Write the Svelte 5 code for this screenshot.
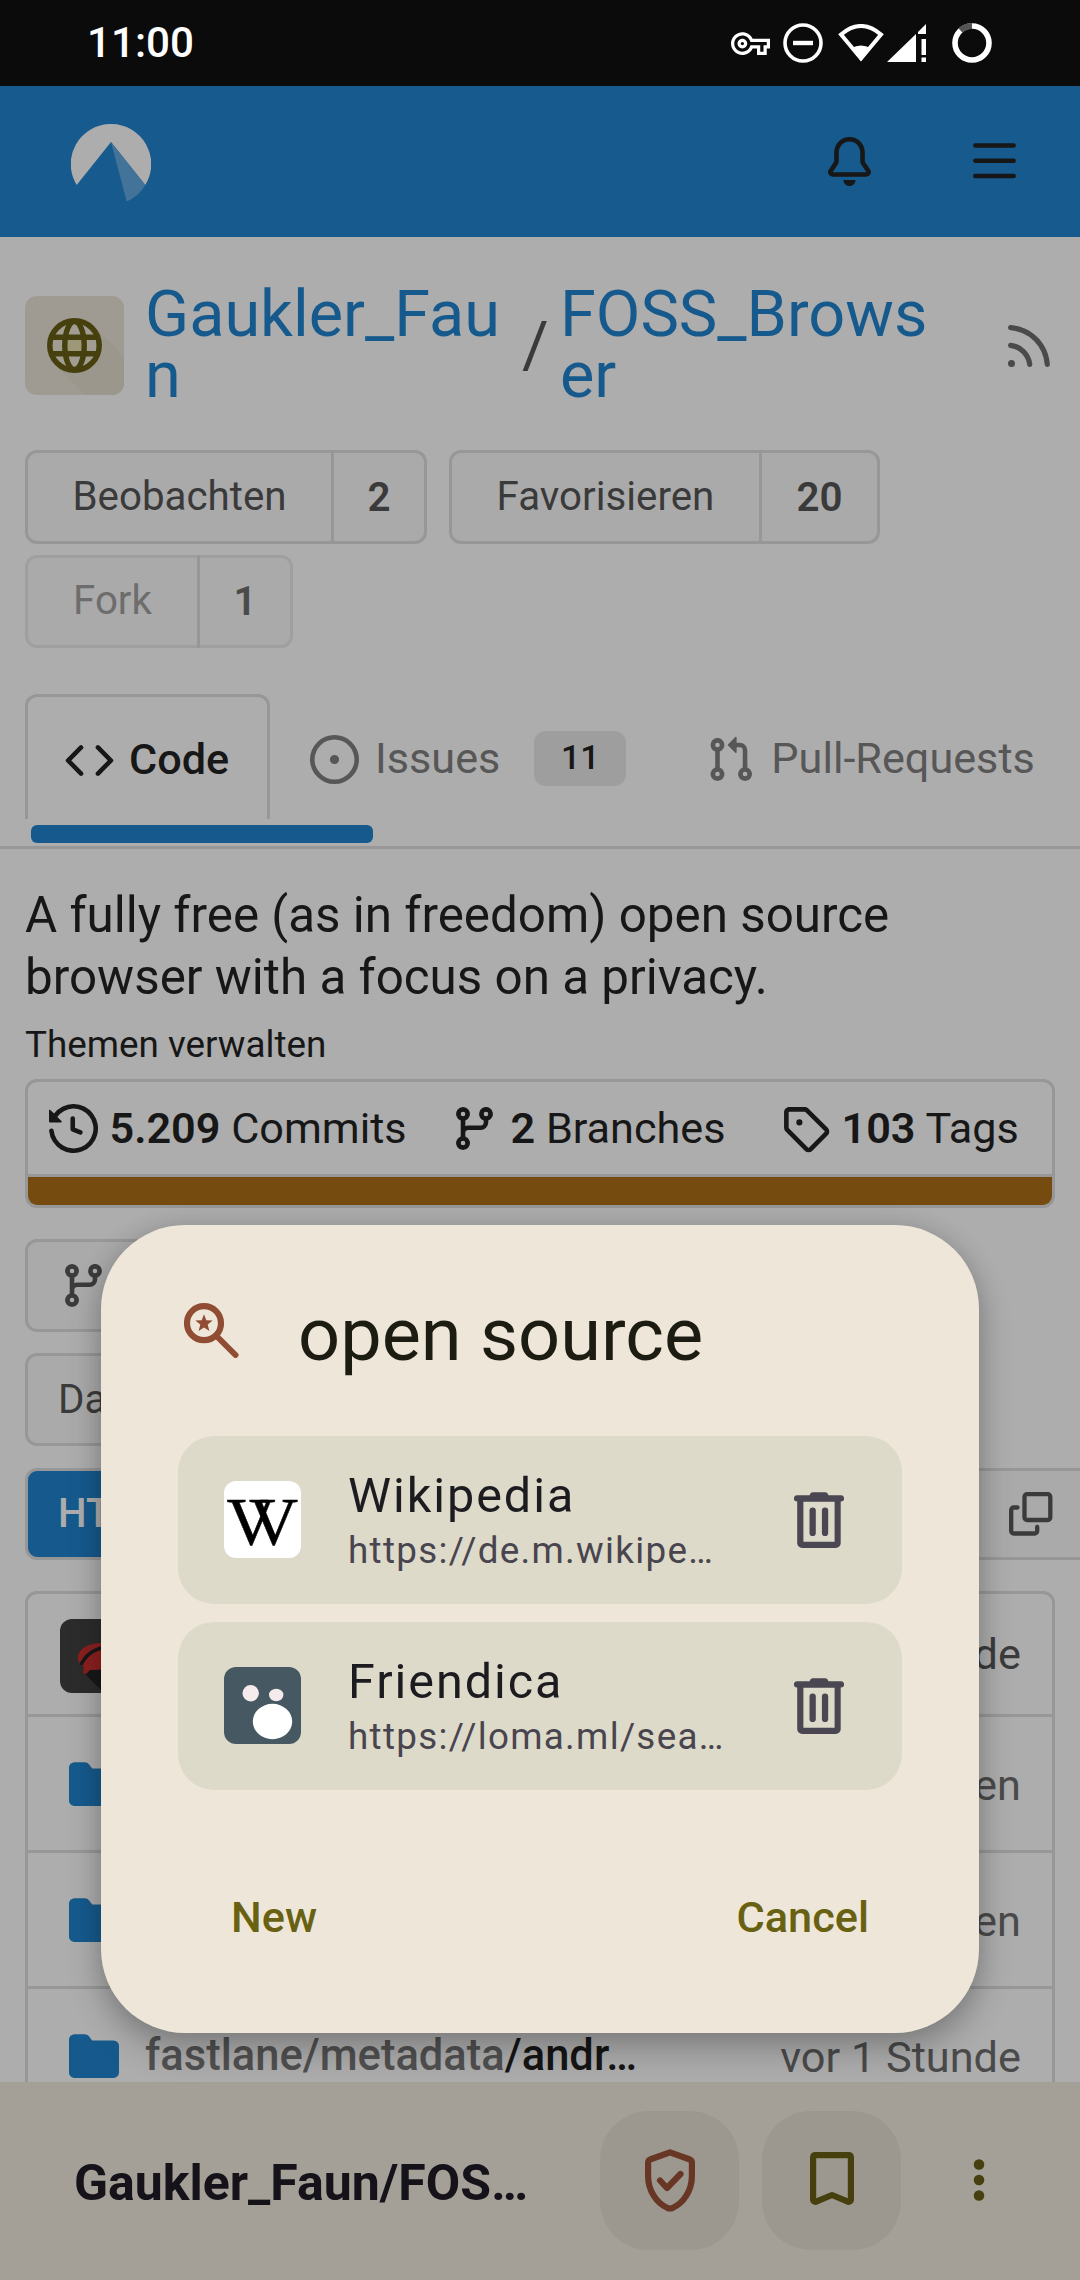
<script>
  const icons = {
    bell: 'M8 16a2 2 0 0 0 1.985-1.75c.017-.137-.097-.25-.235-.25h-3.5c-.138 0-.252.113-.235.25A2 2 0 0 0 8 16ZM3 5a5 5 0 0 1 10 0v2.947c0 .05.015.098.042.139l1.703 2.555A1.519 1.519 0 0 1 13.482 13H2.518a1.516 1.516 0 0 1-1.263-2.36l1.703-2.554A.255.255 0 0 0 3 7.947Zm5-3.5A3.5 3.5 0 0 0 4.5 5v2.947c0 .346-.102.683-.294.97l-1.703 2.556a.017.017 0 0 0-.003.01l.001.006c0 .002.002.004.004.006l.006.004.007.001h10.964l.007-.001.006-.004.004-.006.001-.007a.017.017 0 0 0-.003-.01l-1.703-2.554a1.745 1.745 0 0 1-.294-.97V5A3.5 3.5 0 0 0 8 1.5Z',
    bars: 'M1 2.75A.75.75 0 0 1 1.75 2h12.5a.75.75 0 0 1 0 1.5H1.75A.75.75 0 0 1 1 2.75Zm0 5A.75.75 0 0 1 1.75 7h12.5a.75.75 0 0 1 0 1.5H1.75A.75.75 0 0 1 1 7.75ZM1.75 12h12.5a.75.75 0 0 1 0 1.5H1.75a.75.75 0 0 1 0-1.5Z',
    rss: 'M2.002 2.725a.75.75 0 0 1 .797-.699C8.79 2.42 13.58 7.21 13.974 13.201a.75.75 0 0 1-1.497.098 10.502 10.502 0 0 0-9.776-9.776.747.747 0 0 1-.7-.798ZM2.84 7.05h-.002a7.002 7.002 0 0 1 6.113 6.111.75.75 0 0 1-1.49.178 5.503 5.503 0 0 0-4.8-4.8.75.75 0 0 1 .179-1.489ZM2 13a1 1 0 1 1 2 0 1 1 0 0 1-2 0Z',
    code: 'm11.28 3.22 4.25 4.25a.75.75 0 0 1 0 1.06l-4.25 4.25a.749.749 0 0 1-1.275-.326.749.749 0 0 1 .215-.734L13.94 8l-3.72-3.72a.749.749 0 0 1 .326-1.275.749.749 0 0 1 .734.215Zm-6.56 0a.751.751 0 0 1 1.042.018.751.751 0 0 1 .018 1.042L2.06 8l3.72 3.72a.749.749 0 0 1-.326 1.275.749.749 0 0 1-.734-.215L.47 8.53a.75.75 0 0 1 0-1.06Z',
    issue: 'M8 9.5a1.5 1.5 0 1 0 0-3 1.5 1.5 0 0 0 0 3ZM8 0a8 8 0 1 1 0 16A8 8 0 0 1 8 0ZM1.5 8a6.5 6.5 0 1 0 13 0 6.5 6.5 0 0 0-13 0Z',
    pull: 'M1.5 3.25a2.25 2.25 0 1 1 3 2.122v5.256a2.251 2.251 0 1 1-1.5 0V5.372A2.25 2.25 0 0 1 1.5 3.25Zm5.677-.177L9.573.677A.25.25 0 0 1 10 .854V2.5h1A2.5 2.5 0 0 1 13.5 5v5.628a2.251 2.251 0 1 1-1.5 0V5a1 1 0 0 0-1-1h-1v1.646a.25.25 0 0 1-.427.177L7.177 3.427a.25.25 0 0 1 0-.354ZM3.75 2.5a.75.75 0 1 0 0 1.5.75.75 0 0 0 0-1.5Zm0 9.5a.75.75 0 1 0 0 1.5.75.75 0 0 0 0-1.5Zm8.25.75a.75.75 0 1 0 1.5 0 .75.75 0 0 0-1.5 0Z',
    history: 'm.427 1.927 1.215 1.215a8.002 8.002 0 1 1-1.6 5.685.75.75 0 1 1 1.493-.154 6.5 6.5 0 1 0 1.18-4.458l1.358 1.358A.25.25 0 0 1 3.896 6H.25A.25.25 0 0 1 0 5.75V2.104a.25.25 0 0 1 .427-.177ZM7.75 4a.75.75 0 0 1 .75.75v2.992l2.028.812a.75.75 0 0 1-.557 1.392l-2.5-1A.751.751 0 0 1 7 8.25v-3.5A.75.75 0 0 1 7.75 4Z',
    branch: 'M9.5 3.25a2.25 2.25 0 1 1 3 2.122V6A2.5 2.5 0 0 1 10 8.5H6a1 1 0 0 0-1 1v1.128a2.251 2.251 0 1 1-1.5 0V5.372a2.25 2.25 0 1 1 1.5 0v1.836A2.493 2.493 0 0 1 6 7h4a1 1 0 0 0 1-1v-.628A2.25 2.25 0 0 1 9.5 3.25Zm-6 0a.75.75 0 1 0 1.5 0 .75.75 0 0 0-1.5 0Zm8.25-.75a.75.75 0 1 0 0 1.5.75.75 0 0 0 0-1.5ZM4.25 12a.75.75 0 1 0 0 1.5.75.75 0 0 0 0-1.5Z',
    tag: 'M1 7.775V2.75C1 1.784 1.784 1 2.75 1h5.025c.464 0 .91.184 1.238.513l6.25 6.25a1.75 1.75 0 0 1 0 2.474l-5.026 5.026a1.75 1.75 0 0 1-2.474 0l-6.25-6.25A1.752 1.752 0 0 1 1 7.775Zm1.5 0c0 .066.026.13.073.177l6.25 6.25a.25.25 0 0 0 .354 0l5.025-5.025a.25.25 0 0 0 0-.354l-6.25-6.25a.25.25 0 0 0-.177-.073H2.75a.25.25 0 0 0-.25.25ZM6 5a1 1 0 1 1 0 2 1 1 0 0 1 0-2Z',
    folder: 'M1.75 1A1.75 1.75 0 0 0 0 2.75v10.5C0 14.216.784 15 1.75 15h12.5A1.75 1.75 0 0 0 16 13.25v-8.5A1.75 1.75 0 0 0 14.25 3H7.5a.25.25 0 0 1-.2-.1l-.9-1.2C6.07 1.26 5.55 1 5 1H1.75Z'
  };

  const stats = [
    { icon: 'history', value: '5.209', label: 'Commits', cls: 'commits' },
    { icon: 'branch', value: '2', label: 'Branches', cls: 'branches' },
    { icon: 'tag', value: '103', label: 'Tags', cls: 'tags' }
  ];

  const engines = [
    { name: 'Wikipedia', url: 'https://de.m.wikipe…', icon: 'wiki' },
    { name: 'Friendica', url: 'https://loma.ml/sea…', icon: 'friendica' }
  ];

  const files = [
    { dir: '', name: '', age: 'Tagen' },
    { dir: '', name: '', age: 'Tagen' },
    { dir: 'fastlane/metadata', name: '/andr…', age: 'vor 1 Stunde' }
  ];
</script>

{#snippet oct(name)}
  <svg class="oct" viewBox="0 0 16 16"><path fill="currentColor" d={icons[name]} /></svg>
{/snippet}

<div class="screen">
  <div class="status">
    <span class="clock">11:00</span>
    <svg class="key" viewBox="0 0 24 24"><path fill="#fff" d="M22 19h-6v-4h-2.680c-1.140 2.420-3.600 4-6.320 4-3.860 0-7-3.140-7-7s3.140-7 7-7c2.720 0 5.170 1.580 6.320 4H24v6h-2v4zm-4-2h2v-4h2v-2H11.940l-.23-.67C11.010 8.340 9.110 7 7 7c-2.760 0-5 2.240-5 5s2.240 5 5 5c2.110 0 4.010-1.340 4.710-3.330l.23-.67H18v4zM7 15c-1.650 0-3-1.350-3-3s1.350-3 3-3 3 1.350 3 3-1.350 3-3 3zm0-4c-.55 0-1 .45-1 1s.45 1 1 1 1-.45 1-1-.45-1-1-1z" /></svg>
    <svg class="dnd" viewBox="0 0 40 40"><circle cx="20" cy="20" r="18" fill="none" stroke="#fff" stroke-width="3.6" /><path d="M10 20h20" stroke="#fff" stroke-width="4.4" /></svg>
    <svg class="wifi" viewBox="0 0 46 38"><path fill="none" stroke="#fff" stroke-width="4" d="M3 10.500Q23 -6.500 43 10.500L23 34.500Z" /><path fill="#fff" d="M13 24.500Q23 18.500 33 24.500L23 37Z" /></svg>
    <svg class="signal" viewBox="0 0 39 38"><path fill="#fff" d="M0 38 29 10v28ZM31 8l8-8v10h-8ZM34.500 15H39v16h-4.500ZM34.500 33.500H39V38h-4.500Z" /></svg>
    <svg class="battery" viewBox="0 0 40 40"><circle cx="20" cy="20" r="17" fill="none" stroke="#fff" stroke-width="5.600" /><path d="M8.500 7.500A17 17 0 0 1 20 3" fill="none" stroke="#545454" stroke-width="5.800" /></svg>
  </div>

  <div class="navbar">
    <svg class="logo" viewBox="0 0 80 80">
      <path fill="#adadad" d="M40 0A40 40 0 0 0 5.700 61L40 18 74.300 61A40 40 0 0 0 40 0Z" />
      <path fill="#447399" d="M40 18 55.700 77.500A40 40 0 0 0 74.300 61Z" />
    </svg>
    {@render oct('bell')}
    {@render oct('bars')}
  </div>

  <main>
    <div class="repo">
      <svg class="avatar" viewBox="0 0 99 99">
        <rect width="99" height="99" rx="12" fill="#a09b92" />
        <path fill="#9b978c" d="M69 30 99 61v26a12 12 0 0 1-12 12H60L30 69Z" />
        <circle cx="49.500" cy="49.500" r="25" fill="#a29d92" />
        <path d="M43 41h13v17H43Z" fill="#9d9878" />
        <g fill="none" stroke="#46400e" stroke-width="5.500">
          <circle cx="49.500" cy="49.500" r="24.700" />
          <ellipse cx="49.500" cy="49.500" rx="9.700" ry="24" />
          <path d="M27 41.300h45M27 57.700h45" />
        </g>
      </svg>
      <a class="owner" href="#owner">Gaukler_Faun</a>
      <span class="slash">/</span>
      <a class="name" href="#repo">FOSS_Browser</a>
      <span class="rss">{@render oct('rss')}</span>
    </div>

    <div class="actions">
      <div class="split watch"><span class="label">Beobachten</span><b>2</b></div>
      <div class="split star"><span class="label">Favorisieren</span><b>20</b></div>
      <div class="split fork"><span class="label">Fork</span><b>1</b></div>
    </div>

    <div class="tabbar">
      <div class="tabs">
        <div class="tab active">{@render oct('code')}<span>Code</span></div>
        <div class="tab issues">{@render oct('issue')}<span>Issues</span><em>11</em></div>
        <div class="tab pulls">{@render oct('pull')}<span>Pull-Requests</span></div>
      </div>
      <div class="progress"></div>
    </div>

    <div class="body">
      <p class="desc">A fully free (as in freedom) open source<br />browser with a focus on a privacy.</p>
      <p class="topics">Themen verwalten</p>

      <div class="stats">
        <div class="statrow">
          {#each stats as s}
            <div class="stat {s.cls}">{@render oct(s.icon)}<span><b>{s.value}</b> {s.label}</span></div>
          {/each}
        </div>
        <div class="lang"></div>
      </div>

      <div class="box select">{@render oct('branch')}</div>
      <div class="box file">Datei</div>
      <div class="clone">
        <div class="https">HTTPS</div>
        <div class="url">
          <svg class="copy" viewBox="0 0 44 44"><g fill="none" stroke="currentColor" stroke-width="4.300" stroke-linecap="round"><rect x="15.500" y="2.200" width="25.800" height="25.800" rx="2.500" /><path d="M8.500 15.500H4.700a2.500 2.500 0 0 0-2.500 2.500v21a2.500 2.500 0 0 0 2.500 2.500h21a2.500 2.500 0 0 0 2.500-2.500v-4" /></g></svg>
        </div>
      </div>

      <div class="table">
        <div class="latest">
          <svg class="committer" viewBox="0 0 74 74"><rect width="74" height="74" rx="12" fill="#2c2c2c" /><path fill="#181818" d="M24 54 50 30l24 20v24H44Z" /><path fill="#8c2020" d="M18 39C18 29 30 23 46 24c9 1 16 8 15 14-3 8-14 14-31 13l-4 4-3-1 1-6c-4-2-6-5-6-9Z" /><path fill="none" stroke="#181818" stroke-width="3.600" d="M21 46c3-7 10-15 24-18" /></svg>
          <span>vor 1 Stunde</span>
        </div>
        {#each files as f}
          <div class="row">
            <span class="dir">{@render oct('folder')}</span>
            <span class="path"><i>{f.dir}</i>{f.name}</span>
            <span class="age">{f.age}</span>
          </div>
        {/each}
      </div>
    </div>
  </main>

  <div class="toolbar">
    <span class="page-title">Gaukler_Faun/FOS…</span>
    <div class="tool shield">
      <svg viewBox="0 0 50 63"><g fill="none" stroke="currentColor" stroke-width="6.200" stroke-linejoin="round" stroke-linecap="round"><path d="M25 3.300 45 10.500Q46.900 11.300 46.900 13.500V27C46.900 42 38 54.500 27.500 59Q25 60 22.500 59C12 54.500 3.100 42 3.100 27V13.500Q3.100 11.300 5 10.500Z" /><path d="m15 31.500 7 7.500L35.500 25" /></g></svg>
    </div>
    <div class="tool bookmark">
      <svg viewBox="0 0 44 53"><path fill="none" stroke="currentColor" stroke-width="6.200" stroke-linejoin="round" d="M5.500 3.100h33Q40.900 3.100 40.900 5.500V48Q40.400 49.800 38.500 49.800L22 43 5.500 49.800Q3.600 49.800 3.100 48V5.500Q3.100 3.100 5.500 3.100Z" /></svg>
    </div>
    <svg class="dots" viewBox="0 0 12 44"><circle cx="6" cy="6.500" r="5.300" /><circle cx="6" cy="22" r="5.300" /><circle cx="6" cy="37.500" r="5.300" /></svg>
  </div>

  <div class="dialog">
    <div class="heading">
      <svg viewBox="0 0 55 55"><circle cx="20" cy="20.200" r="17" fill="none" stroke="#914d33" stroke-width="6.200" /><path d="m33.500 34 18 18" stroke="#914d33" stroke-width="6" stroke-linecap="round" /><path fill="#914d33" d="m20 11.300 2.300 6 6.400.3-5 4 1.700 6.400L20 24.500 14.600 28l1.700-6.400-5-4 6.400-.3Z" /></svg>
      <span>open source</span>
    </div>
    <div class="engines">
      {#each engines as e}
        <div class="engine">
          {#if e.icon === 'wiki'}
            <svg class="fav" viewBox="0 0 77 77"><rect width="77" height="77" rx="12" fill="#fff" /><text class="wlogo" x="2.500 25" y="63.300">VV</text></svg>
          {:else}
            <svg class="fav" viewBox="0 0 77 77"><rect width="77" height="77" rx="12" fill="#465963" /><circle cx="26.700" cy="26.200" r="8.200" fill="#f6ebec" /><ellipse cx="52.200" cy="28" rx="7.200" ry="6.200" fill="#f6ebec" /><ellipse cx="48.500" cy="54.500" rx="19.700" ry="17.700" fill="#fff" /></svg>
          {/if}
          <div class="labels"><span class="title">{e.name}</span><span class="link">{e.url}</span></div>
          <svg class="trash" viewBox="0 0 50 56"><g fill="currentColor"><path d="M3 3.300H15.500Q16.500.3 18.500.3h13Q33.500.3 34.500 3.300H47a3 3 0 0 1 0 6.200H3a3 3 0 0 1 0-6.200Z" /><path fill-rule="evenodd" d="M3.200 8H46.700V51a5 5 0 0 1-5 5H8.200a5 5 0 0 1-5-5ZM9.400 9.500v40.200h31.200V9.500Z" /><rect x="15.500" y="15.500" width="6.300" height="28.500" rx="3.100" /><rect x="27.900" y="15.500" width="6.300" height="28.500" rx="3.100" /></g></svg>
        </div>
      {/each}
    </div>
    <div class="buttons"><span>New</span><span>Cancel</span></div>
  </div>
</div>

<style>
  :global(body) { margin: 0; background: #adadad; }
  .screen { position: relative; width: 1080px; height: 2280px; overflow: hidden; display: flex; flex-direction: column; background: #adadad; font-family: Roboto, sans-serif; font-size: 40.3px; line-height: 48px; color: #171717; white-space: nowrap; }
  .screen * { box-sizing: border-box; }
  svg { display: block; flex: none; }
  a { text-decoration: none; color: #165a8d; }
  p { margin: 0; }
  b { font-weight: 600; }
  .oct { width: 49px; height: 49px; }

  .status { height: 86px; flex: none; background: #0b0b0b; color: #fff; display: flex; align-items: center; padding: 0 88px 0 87px; }
  .clock { flex: 1; font-size: 42.2px; font-weight: 500; }
  .key { width: 39px; height: 39px; margin-right: 13px; }
  .dnd { width: 40px; height: 40px; margin-right: 15px; }
  .wifi { width: 46px; height: 38px; margin-right: 3px; }
  .signal { width: 39px; height: 38px; margin-right: 26px; }
  .battery { width: 40px; height: 40px; }

  .navbar { height: 151px; flex: none; background: #175a8e; display: flex; align-items: center; padding: 0 61px 1px 71px; }
  .logo { width: 80px; height: 80px; margin: 6px auto 0 0; }
  .navbar .oct + .oct { margin-left: 96px; }

  main { height: 1845px; flex: none; overflow: hidden; }
  .repo { display: flex; align-items: center; height: 213px; padding: 3px 23px 0 25px; }
  .avatar { width: 99px; height: 99px; }
  .owner, .name, .slash { font-size: 64.8px; line-height: 60.7px; white-space: normal; word-break: break-all; }
  .owner { width: 370px; margin-left: 21px; }
  .slash { width: 30px; margin-left: 7px; color: #3a3a3a; }
  .name { width: 380px; margin-left: 8px; }
  .rss { margin: 2px 0 0 auto; color: #4a4a4a; }
  .rss .oct { width: 56px; height: 56px; }

  .actions { display: flex; flex-wrap: wrap; gap: 11px 22px; padding: 0 25px; height: 198px; align-content: flex-start; }
  .split { display: flex; height: 94px; border: 3px solid #979797; border-radius: 12px; background: #aaa; color: #3a3a3a; }
  .split > * { display: flex; align-items: center; justify-content: center; }
  .split .label { border-right: 3px solid #979797; }
  .split b { flex: 1; padding-top: 1px; }
  .watch { width: 402px; }
  .watch .label { width: 306px; }
  .star { width: 431px; }
  .star .label { width: 310px; }
  .fork { width: 268px; height: 93px; border-color: #9f9f9f; color: #6d6d6d; }
  .fork .label { width: 172px; margin: -3px 0; padding-bottom: 2px; }
  .fork b { color: #4a4a4a; }

  .tabbar { height: 201px; padding: 46px 0 0 25px; border-bottom: 3px solid #979797; }
  .tabs { display: flex; height: 131px; align-items: center; color: #575757; font-size: 43.2px; }
  .tab { display: flex; align-items: center; }
  .tab.active { align-self: flex-start; width: 245px; height: 125px; padding: 4px 0 0 37px; border: 3px solid #979797; border-bottom: 0; border-radius: 12px 12px 0 0; color: #171717; font-weight: 500; }
  .active span { margin: 0 0 1px 15px; }
  .issues { margin-left: 40px; }
  .issues span, .pulls span { margin: 0 0 2px 16px; }
  .issues em { width: 92px; height: 55px; margin: 0 0 2px 34px; border-radius: 12px; background: #9e9e9e; color: #171717; font: 500 34px/53px Roboto, sans-serif; text-align: center; }
  .pulls { margin-left: 80px; }
  .progress { width: 342px; height: 18px; margin-left: 6px; border-radius: 6px; background: #165a8d; }

  .body { padding: 35px 25px 0; }
  .desc { font-size: 49.35px; line-height: 62px; }
  .topics { margin: 13px 0 10px; font-size: 36.8px; line-height: 48px; }
  .stats { height: 129px; border: 3px solid #979797; border-radius: 12px; overflow: hidden; font-size: 43.2px; }
  .statrow { display: flex; align-items: center; height: 95px; border-bottom: 3px solid #979797; padding-left: 21px; }
  .stat { display: flex; align-items: center; gap: 11.5px; }
  .stat span { padding-top: 1px; }
  .commits { width: 401px; }
  .branches { width: 331px; }
  .lang { height: 28px; background: #764b10; }

  .box { display: flex; align-items: center; width: 500px; height: 93px; border: 3px solid #979797; border-radius: 12px; background: #aaa; color: #3b3b3b; }
  .select { margin-top: 31px; padding-left: 31px; }
  .file { margin-top: 21px; padding-left: 30px; }
  .clone { display: flex; width: 1080px; height: 92px; margin: 22px -25px 0 0; }
  .https { width: 200px; border: 3px solid #979797; border-radius: 12px 0 0 12px; background: #165a8d; color: #adadad; font-weight: 500; line-height: 86px; padding-left: 30px; }
  .url { flex: 1; border: solid #979797; border-width: 3px 0; background: #aaa; color: #3b3b3b; display: flex; align-items: center; justify-content: flex-end; padding-right: 52px; }
  .copy { width: 44px; height: 44px; }

  .table { margin-top: 31px; border: 3px solid #979797; border-radius: 12px 12px 0 0; border-bottom: 0; font-size: 43.3px; }
  .latest { display: flex; align-items: center; justify-content: space-between; height: 120px; padding: 4px 31px 0 32px; color: #3b3b3b; }
  .latest span { margin-bottom: 2px; }
  .committer { width: 74px; height: 74px; }
  .row { display: flex; align-items: center; height: 136px; border-top: 3px solid #979797; padding: 0 31px 0 41px; color: #151515; }
  .dir { color: #165a8d; }
  .dir .oct { width: 50px; height: 50px; }
  .path { margin-left: 26px; font-size: 43.5px; font-weight: 500; }
  .path i { font-style: normal; color: #505050; }
  .age { margin: 5px 0 0 auto; color: #4a4a4a; }

  .toolbar { display: flex; align-items: center; height: 198px; flex: none; background: #a5a097; padding: 0 95px 2px 74px; }
  .page-title { flex: 1; font-size: 50px; font-weight: 700; color: #15121a; line-height: 60px; padding-top: 5px; }
  .tool { display: flex; align-items: center; justify-content: center; width: 139px; height: 139px; border-radius: 49px; background: #9d988f; }
  .shield { color: #673625; }
  .shield svg { width: 50px; height: 63px; }
  .bookmark { margin-left: 23px; color: #46400e; }
  .bookmark svg { width: 44px; height: 53px; margin-bottom: 4px; }
  .dots { width: 12px; height: 44px; margin-left: 72px; fill: #46400e; }

  .dialog { position: absolute; left: 101px; top: 1225px; width: 878px; height: 808px; border-radius: 84px; background: #eee7d9; box-shadow: 0 18px 34px rgba(0, 0, 0, .22), 0 0 24px rgba(0, 0, 0, .13); padding: 66px 77px 0; }
  .heading { display: flex; align-items: flex-start; height: 145px; font-size: 73.9px; line-height: 88px; color: #1d1c13; }
  .heading svg { width: 55px; height: 55px; margin: 12px 59px 0 6px; }
  .engines { display: flex; flex-direction: column; gap: 18px; }
  .engine { display: flex; align-items: center; height: 168px; border-radius: 36px; background: #dddaca; padding: 0 58px 0 46px; }
  .fav { width: 77px; height: 77px; margin-bottom: 1px; overflow: visible; }
  .wlogo { font-family: "Liberation Serif", serif; font-size: 68px; fill: #000; stroke: #000; stroke-width: .5px; }
  .labels { display: flex; flex-direction: column; margin-left: 47px; padding-top: 3px; flex: 1; }
  .title { font-size: 48.5px; line-height: 59px; letter-spacing: 1.95px; color: #1c1b1f; }
  .link { font-size: 36.8px; line-height: 52px; letter-spacing: 1.3px; color: #49454f; }
  .trash { width: 50px; height: 56px; color: #4a4652; }
  .buttons { display: flex; justify-content: space-between; padding: 103px 33px 0 53px; font-size: 43.3px; font-weight: 500; line-height: 50px; color: #696112; }
</style>
